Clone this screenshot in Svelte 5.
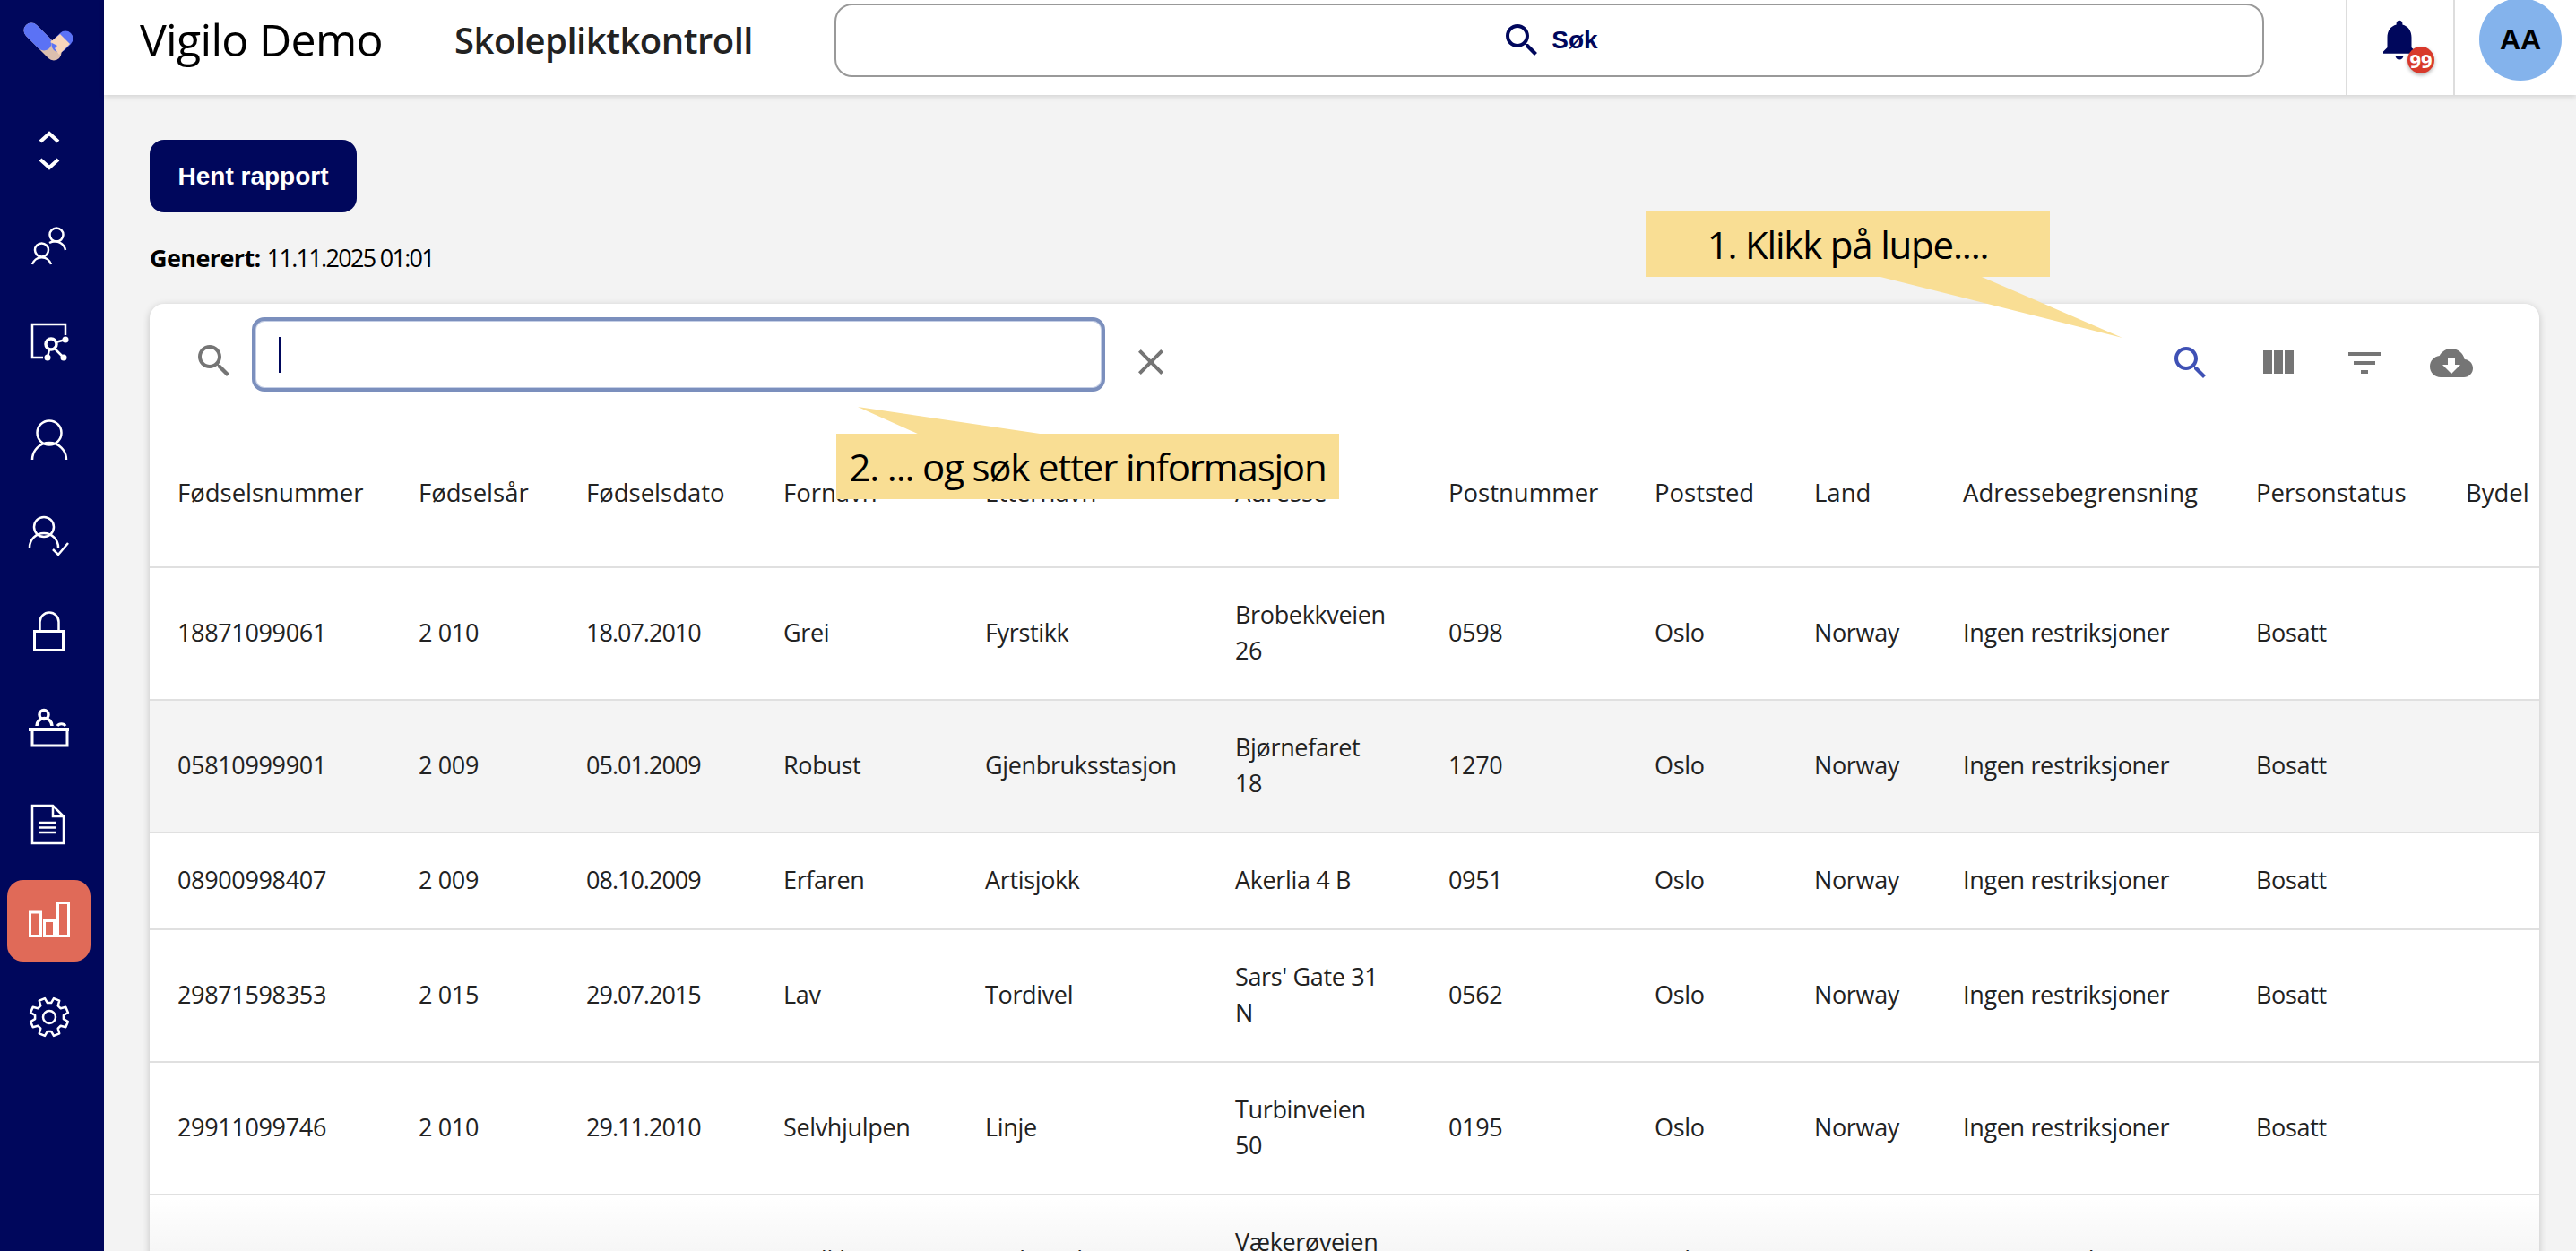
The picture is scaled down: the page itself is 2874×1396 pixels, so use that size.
<script>
    const searchPath = "M15.5 14h-.79l-.28-.27C15.41 12.59 16 11.11 16 9.5 16 5.91 13.09 3 9.5 3S3 5.91 3 9.5 5.91 16 9.5 16c1.61 0 3.09-.59 4.23-1.57l.27.28v.79l5 4.99L20.49 19l-4.99-5zm-6 0C7.01 14 5 11.99 5 9.5S7.01 5 9.5 5 14 7.01 14 9.5 11.99 14 9.5 14z";

    const columns = ["Fødselsnummer", "Fødselsår", "Fødselsdato", "Fornavn", "Etternavn", "Adresse", "Postnummer", "Poststed", "Land", "Adressebegrensning", "Personstatus", "Bydel"];
    const widths = [300, 187, 220, 225, 279, 238, 230, 178, 166, 327, 234, 200];

    const rows = [
        ["18871099061", "2 010", "18.07.2010", "Grei", "Fyrstikk", "Brobekkveien 26", "0598"],
        ["05810999901", "2 009", "05.01.2009", "Robust", "Gjenbruksstasjon", "Bjørnefaret 18", "1270"],
        ["08900998407", "2 009", "08.10.2009", "Erfaren", "Artisjokk", "Akerlia 4 B", "0951"],
        ["29871598353", "2 015", "29.07.2015", "Lav", "Tordivel", "Sars' Gate 31 N", "0562"],
        ["29911099746", "2 010", "29.11.2010", "Selvhjulpen", "Linje", "Turbinveien 50", "0195"],
        ["17881599063", "2 015", "07.08.2015", "Rødkli", "Ledernok", "Vækerøveien 12", "0282"]
    ];

    // gear outline, 8 teeth
    function gearPath(cx, cy, outer, inner) {
        const pts = [];
        for (let i = 0; i < 8; i++) {
            const a = (i * 45 + 22.5) * Math.PI / 180;
            for (const [off, r] of [[-15, inner], [-9, outer], [9, outer], [15, inner]]) {
                const t = a + off * Math.PI / 180;
                pts.push((cx + r * Math.cos(t)).toFixed(1) + " " + (cy + r * Math.sin(t)).toFixed(1));
            }
        }
        return "M" + pts.join("L") + "Z";
    }
</script>

<div class="page">
    <nav class="sidebar">
        <div class="logo">
            <svg width="70" height="60" viewBox="0 0 70 60">
                <path d="M15 19 L40 44" stroke="#dcbfae" stroke-width="17" stroke-linecap="round" fill="none"/>
                <path d="M15 19 L29 33" stroke="#5b72f5" stroke-width="17" stroke-linecap="round" fill="none"/>
                <path d="M53 28 L46 35" stroke="#5b72f5" stroke-width="17" stroke-linecap="round" fill="none"/>
                <path d="M36 32 L47 23 L58 34 L46 46 L41 39 L44 36 Z" fill="#f8d5bb"/>
            </svg>
        </div>
        <div class="chevrons">
            <svg width="48" height="48" viewBox="0 0 48 48" fill="none" stroke="#fff" stroke-width="4">
                <path d="M14 14 L24 5 L34 14"/>
                <path d="M14 34 L24 43 L34 34"/>
            </svg>
        </div>
        <div class="nav-item">
            <svg width="48" height="48" viewBox="0 0 48 48" fill="none" stroke="#fff" stroke-width="2.5">
                <circle cx="32" cy="11" r="7.5"/>
                <path d="M24 20 A 12 12 0 0 1 42 28"/>
                <circle cx="15.5" cy="28" r="7.5"/>
                <path d="M5 44 A 11 11 0 0 1 26 44"/>
            </svg>
        </div>
        <div class="nav-item">
            <svg width="48" height="48" viewBox="0 0 48 48" fill="none" stroke="#fff" stroke-width="2.5">
                <path d="M42 16 V4 H5 V41 H17"/>
                <circle cx="26" cy="26" r="6" stroke-width="3.5"/>
                <path d="M31 24 L42 21 M24 32 L22 41 M30 31 L40 41"/>
                <circle cx="42" cy="21" r="3.5" fill="#fff" stroke="none"/>
                <circle cx="22" cy="41" r="3.5" fill="#fff" stroke="none"/>
                <circle cx="40" cy="41" r="3.5" fill="#fff" stroke="none"/>
            </svg>
        </div>
        <div class="nav-item">
            <svg width="48" height="48" viewBox="0 0 48 48" fill="none" stroke="#fff" stroke-width="2.5">
                <circle cx="24" cy="17" r="13.5"/>
                <path d="M5 47 A 19 19 0 0 1 43 47"/>
            </svg>
        </div>
        <div class="nav-item">
            <svg width="48" height="48" viewBox="0 0 48 48" fill="none" stroke="#fff" stroke-width="2.5">
                <circle cx="18" cy="15" r="11"/>
                <path d="M2 38 A 16 16 0 0 1 34 38"/>
                <path d="M28 40 L34 46 L45 33"/>
            </svg>
        </div>
        <div class="nav-item">
            <svg width="48" height="48" viewBox="0 0 48 48" fill="none" stroke="#fff" stroke-width="3">
                <rect x="7.5" y="23.5" width="32" height="21"/>
                <path d="M13.5 23 V13 A 10.5 10.5 0 0 1 34.5 13 V23" stroke-width="2.5"/>
            </svg>
        </div>
        <div class="nav-item">
            <svg width="48" height="48" viewBox="0 0 48 48" fill="none" stroke="#fff" stroke-width="3">
                <circle cx="18" cy="9.5" r="5" stroke-width="3.5"/>
                <path d="M10 22 A 8.5 8.5 0 0 1 27 22" stroke-width="3.5"/>
                <path d="M33 22 A 5 4 0 0 1 42 22"/>
                <path d="M1 26 H46" stroke-width="4"/>
                <path d="M5 26 V44 H44 V26"/>
            </svg>
        </div>
        <div class="nav-item">
            <svg width="48" height="48" viewBox="0 0 48 48" fill="none" stroke="#fff" stroke-width="2.5">
                <path d="M5 3 H28 L40 15 V45 H5 Z"/>
                <path d="M28 3 V15 H40"/>
                <path d="M13 22 H32 M13 27.5 H32 M13 33 H32"/>
            </svg>
        </div>
        <div class="nav-item active">
            <svg width="48" height="48" viewBox="0 0 48 48" fill="none" stroke="#fff" stroke-width="3">
                <rect x="2.5" y="15" width="12" height="26.5"/>
                <rect x="18.5" y="24.5" width="11" height="17"/>
                <rect x="33.5" y="4.5" width="12" height="37"/>
            </svg>
        </div>
        <div class="nav-item">
            <svg width="48" height="48" viewBox="0 0 48 48" fill="none" stroke="#fff" stroke-width="2.5" stroke-linejoin="round">
                <path d={gearPath(24, 24, 21.5, 16)}/>
                <circle cx="24" cy="24" r="7"/>
            </svg>
        </div>
    </nav>

    <div class="content">
        <header class="topbar">
            <div class="title">Vigilo Demo</div>
            <div class="subtitle">Skolepliktkontroll</div>
            <div class="global-search">
                <svg width="48" height="48" viewBox="0 0 24 24" fill="#00075c"><path d={searchPath}/></svg>
                <span>Søk</span>
            </div>
            <div class="bell">
                <svg width="54" height="54" viewBox="0 0 24 24" fill="#00075c"><path d="M12 22c1.1 0 2-.9 2-2h-4c0 1.1.89 2 2 2zm6-6v-5c0-3.07-1.64-5.64-4.5-6.32V4c0-.83-.67-1.5-1.5-1.5s-1.5.67-1.5 1.5v.68C7.63 5.36 6 7.92 6 11v5l-2 2v1h16v-1l-2-2z"/></svg>
                <span class="badge">99</span>
            </div>
            <div class="avatar-cell">
                <div class="avatar">AA</div>
            </div>
        </header>

        <main class="main">
            <button type="button" class="report-btn">Hent rapport</button>
            <p class="generated"><b>Generert:</b> <span class="stamp">11.11.2025 01:01</span></p>

            <section class="card">
                <div class="toolbar">
                    <svg class="search-grey" width="48" height="48" viewBox="0 0 24 24" fill="#757575"><path d={searchPath}/></svg>
                    <div class="search-input"><span class="caret"></span></div>
                    <svg class="clear" width="48" height="48" viewBox="0 0 24 24" fill="#757575"><path d="M19 6.41L17.59 5 12 10.59 6.41 5 5 6.41 10.59 12 5 17.59 6.41 19 12 13.41 17.59 19 19 17.59 13.41 12z"/></svg>
                    <div class="tools">
                        <span class="tool"><svg width="48" height="48" viewBox="0 0 24 24" fill="#3f51b5"><path d={searchPath}/></svg></span>
                        <span class="tool"><svg width="48" height="48" viewBox="0 0 24 24" fill="#757575"><path d="M10 18h5V5h-5v13zm-6 0h5V5H4v13zM16 5v13h5V5h-5z"/></svg></span>
                        <span class="tool"><svg width="48" height="48" viewBox="0 0 24 24" fill="#757575"><path d="M10 18h4v-2h-4v2zM3 6v2h18V6H3zm3 7h12v-2H6v2z"/></svg></span>
                        <span class="tool"><svg width="48" height="48" viewBox="0 0 24 24" fill="#757575"><path d="M19.35 10.04C18.67 6.59 15.64 4 12 4 9.11 4 6.6 5.64 5.35 8.04 2.34 8.36 0 10.91 0 14c0 3.31 2.69 6 6 6h13c2.76 0 5-2.24 5-5 0-2.64-2.05-4.78-4.65-4.96zM17 13l-5 5-5-5h3V9h4v4h3z"/></svg></span>
                    </div>
                </div>

                <table class="grid">
                    <colgroup>
                        {#each widths as w}
                            <col style="width: {w}px"/>
                        {/each}
                    </colgroup>
                    <thead>
                        <tr>
                            {#each columns as col}
                                <th>{col}</th>
                            {/each}
                        </tr>
                    </thead>
                    <tbody>
                        {#each rows as row, i}
                            <tr class:striped={i === 1} class:short={i === 2}>
                                {#each row as cell}
                                    <td>{cell}</td>
                                {/each}
                                <td>Oslo</td>
                                <td>Norway</td>
                                <td>Ingen restriksjoner</td>
                                <td>Bosatt</td>
                                <td></td>
                            </tr>
                        {/each}
                    </tbody>
                </table>
            </section>
        </main>

        <div class="fade"></div>
    </div>

    <div class="callout callout-one">
        <svg class="tail" width="280" height="80" viewBox="0 0 280 80"><polygon points="0,0 113,0 270,68" fill="#f9de94"/></svg>
        1. Klikk på lupe....
    </div>
    <div class="callout callout-two">
        <svg class="tail" width="234" height="32" viewBox="0 0 234 32"><polygon points="0,0 69,31 210,31" fill="#f9de94"/></svg>
        2. ... og søk etter informasjon
    </div>
</div>

<style>
    :global(body) {
        margin: 0;
        background: #f3f3f3;
    }

    .page {
        position: relative;
        display: flex;
        width: 2874px;
        height: 1396px;
        overflow: hidden;
        font-family: "Open Sans", "Noto Sans", sans-serif;
        color: #111;
    }

    /* sidebar */
    .sidebar {
        flex: 0 0 116px;
        box-sizing: border-box;
        padding-right: 6px;
        display: flex;
        flex-direction: column;
        background: #00075c;
    }

    .logo {
        height: 90px;
        flex: none;
        display: flex;
        justify-content: center;
        align-items: center;
    }

    .chevrons {
        height: 131px;
        flex: none;
        box-sizing: border-box;
        padding-top: 24px;
        display: flex;
        justify-content: center;
        align-items: center;
    }

    .nav-item {
        height: 107.5px;
        flex: none;
        display: flex;
        justify-content: center;
        align-items: center;
    }

    .nav-item.active {
        position: relative;
        z-index: 0;
    }

    .nav-item.active::before {
        content: "";
        position: absolute;
        z-index: -1;
        left: 8px;
        right: 9px;
        top: 8px;
        bottom: 8px;
        background: #e06a58;
        border-radius: 18px;
    }

    /* top bar */
    .content {
        position: relative;
        flex: 1;
        min-width: 0;
        display: flex;
        flex-direction: column;
    }

    .topbar {
        height: 106px;
        flex: none;
        display: flex;
        background: #fff;
        box-shadow: 0 2px 6px rgba(0, 0, 0, 0.14);
        position: relative;
        z-index: 1;
        padding-left: 40px;
    }

    .title {
        width: 351px;
        align-self: center;
        margin-bottom: 18px;
        font-size: 50px;
        letter-spacing: -0.7px;
        color: #000;
    }

    .subtitle {
        width: 424px;
        align-self: center;
        margin-bottom: 18px;
        font-size: 40px;
        font-weight: 600;
        letter-spacing: -0.5px;
        color: #222;
    }

    .global-search {
        width: 1595px;
        height: 82px;
        margin-top: 4px;
        box-sizing: border-box;
        border: 2px solid #999;
        border-radius: 20px;
        display: flex;
        justify-content: center;
        align-items: center;
        gap: 9px;
        font-family: "Liberation Sans", Arial, sans-serif;
        font-weight: 700;
        font-size: 28px;
        color: #00075c;
    }

    .bell {
        position: relative;
        width: 122px;
        margin-left: 91px;
        box-sizing: border-box;
        padding: 17px 0 0 31px;
        border-left: 2px solid #ddd;
        border-right: 2px solid #ddd;
    }

    .badge {
        position: absolute;
        left: 67px;
        top: 52px;
        width: 30px;
        height: 30px;
        border-radius: 50%;
        background: #d8392b;
        color: #fff;
        font-size: 22px;
        font-weight: 700;
        line-height: 30px;
        text-align: center;
        box-shadow: 0 2px 4px rgba(0, 0, 0, 0.3);
    }

    .avatar-cell {
        flex: 1;
        padding-left: 27px;
    }

    .avatar {
        width: 92px;
        height: 92px;
        margin-top: -2px;
        border-radius: 50%;
        background: #84b3ec;
        display: flex;
        justify-content: center;
        align-items: center;
        font-family: "Liberation Sans", Arial, sans-serif;
        font-weight: 700;
        font-size: 32px;
        color: #000;
    }

    /* main area */
    .main {
        flex: 1;
        min-height: 0;
        padding: 50px 41px 0 51px;
        background: #f3f3f3;
    }

    .report-btn {
        display: block;
        width: 231px;
        height: 81px;
        padding: 0;
        border: none;
        border-radius: 16px;
        background: #00075c;
        color: #fff;
        font-family: "Liberation Sans", Arial, sans-serif;
        font-weight: 700;
        font-size: 28px;
    }

    .generated {
        margin: 32px 0 0;
        height: 38px;
        line-height: 38px;
        font-size: 27px;
        color: #000;
    }

    .generated b {
        letter-spacing: -0.6px;
    }

    .stamp {
        letter-spacing: -1.7px;
    }

    .card {
        margin-top: 32px;
        height: 1200px;
        background: #fff;
        border-radius: 16px;
        overflow: hidden;
        box-shadow: 0 2px 8px rgba(0, 0, 0, 0.2);
    }

    .toolbar {
        height: 130px;
        box-sizing: border-box;
        padding: 15px 50px 0 48px;
        display: flex;
        align-items: flex-start;
    }

    .search-grey {
        margin-top: 25px;
    }

    .search-input {
        width: 952px;
        height: 83px;
        margin-left: 18px;
        box-sizing: border-box;
        border: 4px solid #7b8fbd;
        border-radius: 14px;
        box-shadow: inset 0 0 0 1px #c5cfe6;
        padding: 18px 0 0 26px;
    }

    .caret {
        display: block;
        width: 3px;
        height: 40px;
        background: #00075c;
    }

    .clear {
        margin: 26px 0 0 27px;
    }

    .tools {
        margin-left: auto;
        display: flex;
    }

    .tool {
        width: 97px;
        height: 96px;
        margin-top: 3px;
        display: flex;
        justify-content: center;
        align-items: center;
    }

    .grid {
        width: 2584px;
        table-layout: fixed;
        border-collapse: collapse;
        font-size: 27px;
        letter-spacing: -0.35px;
    }

    .grid th {
        height: 164px;
        padding: 0 0 3px;
        box-sizing: border-box;
        text-align: left;
        font-size: 27.5px;
        font-weight: 500;
        letter-spacing: 0;
        color: #222;
        white-space: nowrap;
    }

    .grid thead tr {
        border-bottom: 2px solid #e0e0e0;
    }

    .grid th:first-child,
    .grid td:first-child {
        padding-left: 31px;
    }

    .grid tbody tr {
        height: 148px;
        border-bottom: 2px solid #e0e0e0;
    }

    .grid tbody tr.short {
        height: 108px;
    }

    .grid tr.striped {
        background: #f4f4f4;
    }

    .grid td {
        padding: 0 32px 3px 0;
        line-height: 40px;
        color: #222;
    }

    .grid td:nth-child(3) {
        letter-spacing: -1px;
    }

    .grid td:nth-child(6) {
        padding-right: 68px;
    }

    .fade {
        position: absolute;
        left: 51px;
        right: 41px;
        bottom: 0;
        height: 60px;
        background: linear-gradient(rgba(0, 0, 0, 0), rgba(0, 0, 0, 0.035));
    }

    /* annotations laid over the screenshot */
    .callout {
        position: absolute;
        z-index: 2;
        background: #f9de94;
        color: #000;
        display: flex;
        align-items: center;
        justify-content: center;
        white-space: nowrap;
        font-size: 42px;
        letter-spacing: -1.2px;
    }

    .tail {
        position: absolute;
    }

    .callout-one {
        left: 1836px;
        top: 236px;
        width: 451px;
        height: 73px;
    }

    .callout-one .tail {
        left: 262px;
        top: 73px;
    }

    .callout-two {
        left: 933px;
        top: 484px;
        width: 561px;
        height: 73px;
    }

    .callout-two .tail {
        left: 24px;
        top: -30px;
    }
</style>
